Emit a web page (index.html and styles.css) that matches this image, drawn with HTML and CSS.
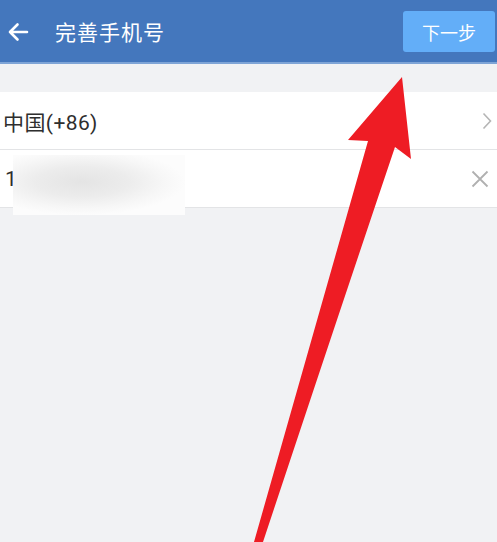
FILE: index.html
```html
<!DOCTYPE html>
<html lang="zh">
<head>
<meta charset="utf-8">
<title>完善手机号</title>
<link rel="stylesheet" href="styles.css">
</head>
<body>
<div class="page">
  <header class="topbar">
    <div class="left">
      <svg class="back" width="22" height="20" viewBox="0 0 22 20"><path d="M20 10H3M10.5 2.5L3 10l7.5 7.5" fill="none" stroke="#fff" stroke-width="2.6" stroke-linecap="round" stroke-linejoin="round"/></svg>
      <span class="title">完善手机号</span>
    </div>
    <button class="next">下一步</button>
  </header>
  <div class="form">
    <div class="row">
      <span class="label">中国(+86)</span>
      <svg class="chev" width="10" height="18" viewBox="0 0 10 18"><path d="M1.5 1.5L8.5 9l-7 7.5" fill="none" stroke="#b5b5b5" stroke-width="1.6"/></svg>
    </div>
    <div class="row">
      <span class="label">1</span>
      <svg class="clear" width="18" height="18" viewBox="0 0 18 18"><path d="M1.5 1.5l15 15M16.5 1.5l-15 15" stroke="#b0b0b0" stroke-width="1.8"/></svg>
      <div class="blur"></div>
    </div>
  </div>
  <svg class="arrow" width="497" height="542" viewBox="0 0 497 542"><path d="M402 77 L411 159 L395 147 Q330 340 263 542 L254 542 Q310 345 368 141 L348 140 Z" fill="#ee1c24"/></svg>
</div>
</body>
</html>
```
FILE: styles.css
```css
html, body {
  margin: 0;
  padding: 0;
}
body {
  background: #f1f2f4;
  font-family: Roboto, "Noto Sans CJK SC", sans-serif;
}
.page {
  position: relative;
  width: 497px;
  height: 542px;
  overflow: hidden;
  background: #f1f2f4;
}
.topbar {
  height: 62px;
  background: #4477bd;
  border-bottom: 2px solid #7ea4d6;
  display: flex;
  align-items: center;
  justify-content: space-between;
  padding: 0 2px 0 7px;
}
.left {
  display: flex;
  align-items: center;
}
.back {
  display: block;
  margin-top: 1px;
}
.title {
  color: #fff;
  font-size: 21px;
  margin-left: 26px;
  letter-spacing: 1px;
}
.next {
  width: 92px;
  height: 41px;
  margin-top: 1px;
  border: none;
  border-radius: 3px;
  background: #63aef8;
  color: #fff;
  font-family: "Noto Sans CJK SC", sans-serif;
  font-size: 18px;
  padding: 0;
}
.form {
  margin-top: 28px;
  background: #fff;
  border-bottom: 1px solid #e3e4e6;
}
.row {
  position: relative;
  height: 57px;
  display: flex;
  align-items: center;
  justify-content: space-between;
  padding: 0 5px 0 3px;
}
.row + .row {
  border-top: 1px solid #e3e4e6;
}
.row + .row .label {
  margin-left: 2px;
}
.label {
  font-size: 21px;
  color: #2e2e2e;
  letter-spacing: 0.4px;
}
.chev {
  display: block;
}
.clear {
  display: block;
  margin-right: 3px;
}
.blur {
  position: absolute;
  left: 13px;
  top: 5px;
  width: 172px;
  height: 60px;
  background: radial-gradient(ellipse 60% 55% at 40% 45%, #e4e4e4 0%, #ececec 45%, #f7f7f7 80%, #fcfcfc 100%);
}
.arrow {
  position: absolute;
  left: 0;
  top: 0;
  pointer-events: none;
}
```
